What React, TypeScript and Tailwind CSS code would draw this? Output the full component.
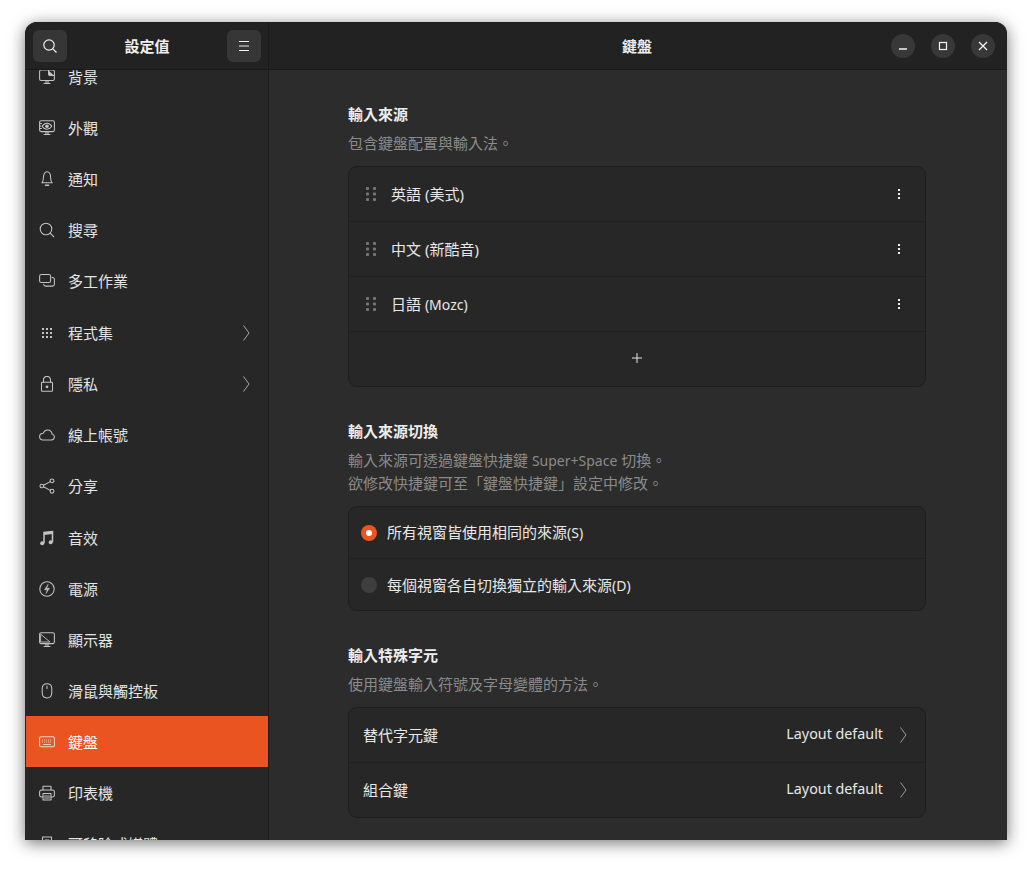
import React from "react";

const FONT = '"Noto Sans", "Noto Sans CJK TC", sans-serif';

const S = { fill: "none", stroke: "currentColor", strokeWidth: 1.05, strokeLinecap: "round" as const, strokeLinejoin: "round" as const };

function Ico({ children, w = 16, h = 16 }: { children: React.ReactNode; w?: number; h?: number }) {
  return (
    <svg width={w} height={h} viewBox="0 0 16 16" className="shrink-0" {...S}>
      {children}
    </svg>
  );
}

const icons: Record<string, React.ReactNode> = {
  bg: (
    <Ico>
      <rect x="0.6" y="1" width="14.8" height="10.5" rx="1.5" />
      <path d="M9.5 1.5v3.5a1.5 1.5 0 0 0 1.5 1.5h4" fill="currentColor" />
      <path d="M5 14.5h6M7 11.5v3M9 11.5v3" />
    </Ico>
  ),
  look: (
    <Ico>
      <rect x="0.6" y="0.8" width="14.8" height="10.8" rx="1.5" />
      <path d="M3.2 6.2c1.3-2 3-3 4.8-3s3.5 1 4.8 3c-1.3 2-3 3-4.8 3s-3.5-1-4.8-3z" />
      <circle cx="8" cy="6.2" r="1.3" fill="currentColor" />
      <path d="M5 14.5h6M7 11.6v2.9M9 11.6v2.9" />
      <path d="M1 3.5h1.5M1 6h1M1 8.5h1.5" />
    </Ico>
  ),
  bell: (
    <Ico>
      <path d="M2.800 11.800c1.200-1 1.600-2.500 1.600-5C4.400 3.500 5.800.8 8 .8s3.600 2.700 3.600 6c0 2.500.4 4 1.600 5z" />
      <path d="M6.500 14.200h3" strokeWidth="1.600" />
    </Ico>
  ),
  search: (
    <Ico>
      <circle cx="7" cy="7" r="5.800" />
      <path d="M11.200 11.200l3.600 3.600" />
    </Ico>
  ),
  multi: (
    <Ico>
      <rect x="0.600" y="1.500" width="11" height="8" rx="1.800" />
      <path d="M13 4.500h.6a1.800 1.800 0 0 1 1.800 1.800v5a1.800 1.800 0 0 1-1.800 1.800H6.500a1.800 1.800 0 0 1-1.800-1.800" />
    </Ico>
  ),
  apps: (
    <svg width="16" height="16" viewBox="0 0 16 16" fill="currentColor" className="shrink-0">
      {[3, 7, 11].flatMap((y) => [3, 7, 11].map((x) => <rect key={`${x}-${y}`} x={x} y={y} width="2" height="2" />))}
    </svg>
  ),
  lock: (
    <Ico>
      <rect x="2.500" y="6.300" width="11" height="9" rx="0.800" />
      <path d="M4.500 6.300V4a3.500 3.500 0 0 1 7 0v2.300" />
      <circle cx="8" cy="10.800" r="0.900" fill="currentColor" />
    </Ico>
  ),
  cloud: (
    <Ico>
      <path d="M4 13h8.500a3 3 0 0 0 .6-5.900C12.700 4.700 10.700 3 8.500 3 6.500 3 5 4.200 4.300 6.200 2 6.300.6 7.800.6 9.600.6 11.600 2 13 4 13z" />
    </Ico>
  ),
  share: (
    <Ico>
      <circle cx="2.800" cy="8" r="1.800" />
      <circle cx="13" cy="2.800" r="1.900" />
      <circle cx="13" cy="13.200" r="1.900" />
      <path d="M4.500 7.200l6.800-3.600M4.500 8.800l6.800 3.600" />
    </Ico>
  ),
  music: (
    <svg width="16" height="16" viewBox="0 0 16 16" className="shrink-0">
      <path d="M5 13V2.500l8.500-1V12" fill="none" stroke="currentColor" strokeWidth="1.500" />
      <path d="M5 2.500l8.500-1v2.500L5 5z" fill="currentColor" />
      <circle cx="3.200" cy="13.300" r="2" fill="currentColor" />
      <circle cx="11.700" cy="12.300" r="2" fill="currentColor" />
    </svg>
  ),
  power: (
    <Ico>
      <circle cx="8" cy="8" r="7.200" />
      <path d="M9 3.500L5.500 8.800h2.800L7 12.500l3.500-5.300H7.800z" fill="currentColor" strokeWidth="0.500" />
    </Ico>
  ),
  display: (
    <Ico>
      <rect x="0.600" y="0.800" width="14.800" height="10.800" rx="1.500" />
      <path d="M2 2.500l9 7.500H2z" strokeWidth="0.900" />
      <path d="M5 14.500h6M7 11.600v2.900M9 11.600v2.900" />
    </Ico>
  ),
  mouse: (
    <Ico>
      <path d="M8 .8c-3 0-4.800 1.500-4.800 5v3.800c0 3.300 1.800 5.400 4.800 5.400s4.800-2.100 4.800-5.400V5.800C12.800 2.300 11 .8 8 .8z" />
      <path d="M8 3v2.500" />
    </Ico>
  ),
  keyboard: (
    <Ico>
      <rect x="0.600" y="2.800" width="14.800" height="10" rx="1.500" />
      <path d="M3 6h10M3 8h10" strokeDasharray="0.900 1.100" strokeLinecap="butt" />
      <path d="M4.500 10.500h7" />
    </Ico>
  ),
  printer: (
    <Ico>
      <path d="M4 5V1.200h8V5" />
      <path d="M4 12H2.500A1.900 1.900 0 0 1 .6 10V7a2 2 0 0 1 2-2h10.800a2 2 0 0 1 2 2v3a1.900 1.900 0 0 1-1.900 2H12" />
      <rect x="4" y="8.500" width="8" height="6.500" />
      <path d="M5.500 11h5M5.500 13h5" />
    </Ico>
  ),
  removable: (
    <Ico>
      <rect x="3.500" y="1" width="9" height="9" />
      <path d="M6 4h4M6 6.500h4M2 10h12v4H2z" />
    </Ico>
  ),
};

function Chevron({ className = "" }: { className?: string }) {
  return (
    <svg width="8" height="16" viewBox="0 0 8 16" fill="none" stroke="currentColor" strokeWidth="1" className={className}>
      <path d="M1.500 0.500L7 8 1.500 15.500" />
    </svg>
  );
}

const items: { icon: string; label: string; chev?: boolean; active?: boolean; gap?: boolean }[] = [
  { icon: "bg", label: "背景" },
  { icon: "look", label: "外觀" },
  { icon: "bell", label: "通知" },
  { icon: "search", label: "搜尋" },
  { icon: "multi", label: "多工作業" },
  { icon: "apps", label: "程式集", chev: true, gap: true },
  { icon: "lock", label: "隱私", chev: true },
  { icon: "cloud", label: "線上帳號" },
  { icon: "share", label: "分享" },
  { icon: "music", label: "音效", gap: true },
  { icon: "power", label: "電源" },
  { icon: "display", label: "顯示器" },
  { icon: "mouse", label: "滑鼠與觸控板" },
  { icon: "keyboard", label: "鍵盤", active: true },
  { icon: "printer", label: "印表機" },
  { icon: "removable", label: "可移除式媒體" },
];

function SideRow({ it }: { it: (typeof items)[number] }) {
  return (
    <div
      className={`flex h-[51px] shrink-0 items-center pr-[18px] ${it.active ? "ml-px bg-[#e95420] pl-[13px] text-white" : "pl-[14px] text-[#e4e4e4]"} ${it.gap ? "mt-px" : ""}`}
    >
      <span className={it.active ? "text-[#f8d8cc]" : "text-[#c4c4c4]"}>{icons[it.icon]}</span>
      <span className="ml-[13px] flex-1 text-[15px] leading-[20px]">{it.label}</span>
      {it.chev && <Chevron className="text-[#a8a8a8]" />}
    </div>
  );
}

function Drag() {
  return (
    <svg width="10" height="16" viewBox="0 0 10 16" fill="#757575" className="shrink-0">
      {[1, 6.500, 12].flatMap((y) => [0, 7].map((x) => <rect key={`${x}-${y}`} x={x} y={y} width="3" height="3" rx="0.800" />))}
    </svg>
  );
}

function Kebab() {
  return (
    <svg width="4" height="12" viewBox="0 0 4 12" fill="#f0f0f0" className="shrink-0">
      <rect x="1" y="1" width="2" height="2" />
      <rect x="1" y="5" width="2" height="2" />
      <rect x="1" y="9" width="2" height="2" />
    </svg>
  );
}

function Card({ children }: { children: React.ReactNode }) {
  return <div className="w-[578px] overflow-hidden rounded-[9px] border border-[#1e1e1e] bg-[#272727]">{children}</div>;
}

function SourceRow({ label, latin }: { label: string; latin?: string }) {
  return (
    <div className="flex h-[55px] items-center border-b border-[#202020] pl-[17px] pr-[24px]">
      <Drag />
      <span className="ml-[15px] flex-1 text-[15px] text-[#e8e8e8]">
        {label}
        {latin && <span className="text-[14px]">{latin}</span>}
      </span>
      <Kebab />
    </div>
  );
}

function HeaderButton({ children }: { children: React.ReactNode }) {
  return <div className="flex h-[32px] w-[34px] items-center justify-center rounded-[6px] bg-[#363636] text-[#f0f0f0]">{children}</div>;
}

function WinButton({ children }: { children: React.ReactNode }) {
  return <div className="flex h-[24px] w-[24px] items-center justify-center rounded-full bg-[#383838] text-[#f2f2f2]">{children}</div>;
}

export default function App() {
  return (
    <div className="h-[869px] w-[1032px] overflow-hidden bg-white pl-[25px] pt-[22px]" style={{ fontFamily: FONT }}>
      <div className="flex h-[818px] w-[982px] flex-col overflow-hidden rounded-t-[12px] bg-[#2c2c2c] shadow-[0_3px_16px_rgba(0,0,0,0.55)]">
        <header className="flex h-[48px] shrink-0 border-b border-[#191919] bg-[#222222]">
          <div className="flex w-[244px] shrink-0 items-center justify-between border-r border-[#1a1a1a] pl-[8px] pr-[7px]">
            <HeaderButton>
              <svg width="16" height="16" viewBox="0 0 16 16" fill="none" stroke="currentColor" strokeWidth="1.200">
                <circle cx="7" cy="7" r="5.200" />
                <path d="M10.800 10.800L14.500 14.500" />
              </svg>
            </HeaderButton>
            <span className="pt-[2px] text-[15px] font-bold text-[#eeeeee]">設定值</span>
            <HeaderButton>
              <svg width="12" height="12" viewBox="0 0 12 12" stroke="currentColor" strokeWidth="1">
                <path d="M1 1.500h10M1 6h10M1 10.500h10" />
              </svg>
            </HeaderButton>
          </div>
          <div className="flex flex-1 items-center pl-[330px] pr-[12px]">
            <span className="flex-1 pl-[23px] pt-[2px] text-[15px] font-bold text-[#eeeeee]">鍵盤</span>
            <div className="flex gap-[16px]">
              <WinButton>
                <svg width="12" height="12" viewBox="0 0 12 12" stroke="currentColor" strokeWidth="1.300">
                  <path d="M2 9h8" />
                </svg>
              </WinButton>
              <WinButton>
                <svg width="10" height="10" viewBox="0 0 10 10" fill="none" stroke="currentColor" strokeWidth="1.200">
                  <rect x="1.500" y="1.500" width="7" height="7" />
                </svg>
              </WinButton>
              <WinButton>
                <svg width="10" height="10" viewBox="0 0 10 10" stroke="currentColor" strokeWidth="1.300">
                  <path d="M1 1l8 8M9 1l-8 8" />
                </svg>
              </WinButton>
            </div>
          </div>
        </header>
        <div className="flex min-h-0 flex-1">
          <aside className="w-[244px] shrink-0 overflow-hidden border-r border-[#1c1c1c] bg-[#272727]">
            <div className="-mt-[19px] flex flex-col">
              {items.map((it) => (
                <SideRow key={it.label} it={it} />
              ))}
            </div>
          </aside>
          <main className="flex-1 pl-[79px] pt-[33px]">
            <h2 className="text-[15px] font-bold leading-[22px] text-[#eeeeee]">輸入來源</h2>
            <p className="mb-[11px] mt-[7px] text-[15px] leading-[23px] text-[#8b8b8b]">包含鍵盤配置與輸入法。</p>
            <Card>
              <SourceRow label="英語 (美式)" />
              <SourceRow label="中文 (新酷音)" />
              <SourceRow label="日語 " latin="(Mozc)" />
              <div className="flex h-[54px] items-center justify-center pb-[2px] text-[#e8e8e8]">
                <svg width="12" height="12" viewBox="0 0 12 12" stroke="currentColor" strokeWidth="1">
                  <path d="M6 1v10M1 6h10" />
                </svg>
              </div>
            </Card>
            <h2 className="mt-[33px] text-[15px] font-bold leading-[22px] text-[#eeeeee]">輸入來源切換</h2>
            <p className="mb-[11px] mt-[7px] text-[15px] leading-[23px] text-[#8b8b8b]">
              輸入來源可透過鍵盤快捷鍵 <span className="text-[14px]">Super+Space</span> 切換。
              <br />
              欲修改快捷鍵可至「鍵盤快捷鍵」設定中修改。
            </p>
            <Card>
              <div className="flex h-[52px] items-center border-b border-[#202020] pl-[12px]">
                <span className="flex h-[16px] w-[16px] items-center justify-center rounded-full bg-[#e95420]">
                  <span className="h-[6px] w-[6px] rounded-full bg-white" />
                </span>
                <span className="ml-[10px] text-[15px] text-[#e8e8e8]">
                  所有視窗皆使用相同的來源<span className="text-[14px]">(S)</span>
                </span>
              </div>
              <div className="flex h-[51px] items-center pl-[12px]">
                <span className="h-[16px] w-[16px] rounded-full bg-[#3e3e3e]" />
                <span className="ml-[10px] pt-[2px] text-[15px] text-[#e8e8e8]">
                  每個視窗各自切換獨立的輸入來源<span className="text-[14px]">(D)</span>
                </span>
              </div>
            </Card>
            <h2 className="mt-[33px] text-[15px] font-bold leading-[22px] text-[#eeeeee]">輸入特殊字元</h2>
            <p className="mb-[11px] mt-[7px] text-[15px] leading-[23px] text-[#8b8b8b]">使用鍵盤輸入符號及字母變體的方法。</p>
            <Card>
              <div className="flex h-[55px] items-center border-b border-[#202020] pl-[14px] pr-[18px] text-[15px] text-[#e8e8e8]">
                <span className="flex-1">替代字元鍵</span>
                <span className="pb-[2px] text-[14.3px]">Layout default</span>
                <Chevron className="ml-[16px] text-[#9a9a9a]" />
              </div>
              <div className="flex h-[54px] items-center pl-[14px] pr-[18px] text-[15px] text-[#e8e8e8]">
                <span className="flex-1">組合鍵</span>
                <span className="pb-[2px] text-[14.3px]">Layout default</span>
                <Chevron className="ml-[16px] text-[#9a9a9a]" />
              </div>
            </Card>
          </main>
        </div>
      </div>
    </div>
  );
}
